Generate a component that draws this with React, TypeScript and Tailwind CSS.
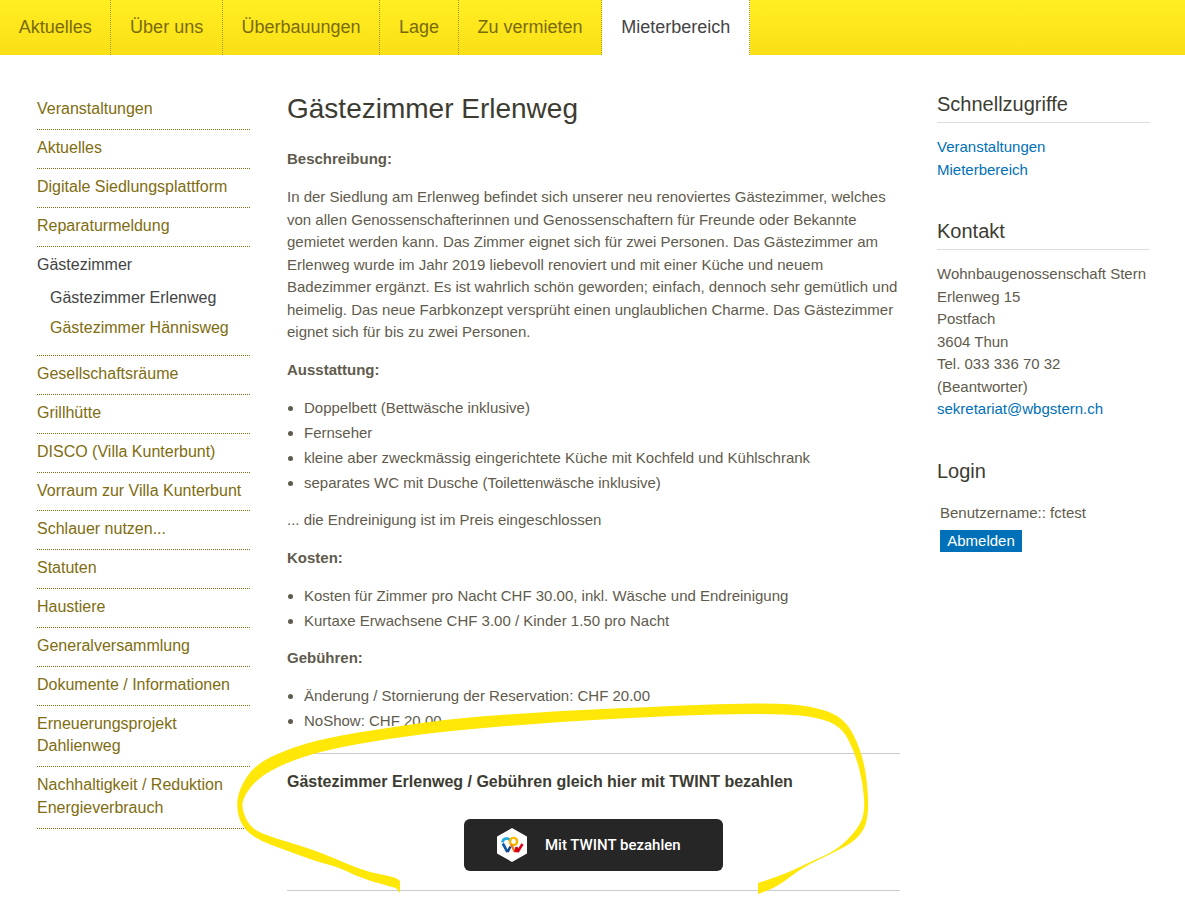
import React from 'react';

const TABS = ['Aktuelles', 'Über uns', 'Überbauungen', 'Lage', 'Zu vermieten'];

const SIDE_TOP = ['Veranstaltungen', 'Aktuelles', 'Digitale Siedlungsplattform', 'Reparaturmeldung'];
const SIDE_BOTTOM = [
  'Gesellschaftsräume',
  'Grillhütte',
  'DISCO (Villa Kunterbunt)',
  'Vorraum zur Villa Kunterbunt',
  'Schlauer nutzen...',
  'Statuten',
  'Haustiere',
  'Generalversammlung',
  'Dokumente / Informationen',
  'Erneuerungsprojekt Dahlienweg',
  'Nachhaltigkeit / Reduktion Energieverbrauch',
];

// marker stroke outline, traced from the picture
const SCRIBBLE: [number, number][] = [
  [396, 888], [365, 880], [338, 867], [318, 862], [285, 850], [258, 840], [242, 827], [236, 807], [240, 787],
  [255, 765], [285, 750], [325, 738], [392, 727], [458, 718], [555, 711], [650, 707], [717, 704], [790, 703],
  [827, 710], [847, 722], [860, 748], [867, 777], [869, 820], [857, 840], [833, 853], [803, 867], [777, 887],
  [758, 894], [758, 883], [783, 875], [810, 862], [837, 850], [857, 830], [865, 813], [863, 783], [855, 753],
  [842, 727], [817, 717], [783, 714], [717, 714], [650, 717], [555, 722], [458, 730], [392, 738], [325, 750],
  [285, 763], [258, 778], [243, 797], [242, 810], [250, 827], [265, 835], [298, 845], [322, 853], [345, 863],
  [368, 872], [395, 877], [400, 881], [400, 893], [396, 893],
];

const scribblePath = () => {
  let d = `M${SCRIBBLE[0][0]} ${SCRIBBLE[0][1]}`;
  for (let i = 1; i < SCRIBBLE.length - 1; i++) {
    const [x, y] = SCRIBBLE[i];
    const [nx, ny] = SCRIBBLE[i + 1];
    // keep the two cut ends of the stroke sharp
    if (i === 27 || i === 28 || i >= 56) d += ` L${x} ${y}`;
    else d += ` Q${x} ${y} ${(x + nx) / 2} ${(y + ny) / 2}`;
  }
  return d + ' Z';
};

const SideItem = ({ label }: { label: string }) => (
  <li className="border-b border-dotted border-[#7f6d10] pt-[7px] pb-[8.5px] leading-[22.4px]">
    <a className="text-[#7f6d10]">{label}</a>
  </li>
);

const Label = ({ children }: { children: React.ReactNode }) => (
  <p className="mb-[15.5px] font-bold">{children}</p>
);

const Bullets = ({ items }: { items: string[] }) => (
  <ul className="mb-[15px] list-disc pl-[17px] marker:text-[#5f5b4d]">
    {items.map(item => (
      <li key={item} className="mb-[2.5px]">{item}</li>
    ))}
  </ul>
);

const TwintLogo = () => (
  <svg width="32" height="36" viewBox="0 0 32 36">
    <path d="M16 1 L30.5 9.2 Q31 9.5 31 10 L31 26 Q31 26.5 30.5 26.8 L16 35 L1.5 26.8 Q1 26.5 1 26 L1 10 Q1 9.5 1.5 9.2 Z" fill="#fff" />
    <path d="M6.5 15.5 a4.2 4.2 0 0 1 8 -1.5" fill="none" stroke="#1ba7e0" strokeWidth="2.6" />
    <path d="M6.8 16.5 L11.5 25" fill="none" stroke="#0b5aa8" strokeWidth="2.6" />
    <path d="M11.5 25 L14.5 19.5" fill="none" stroke="#0f3f86" strokeWidth="2.4" />
    <circle cx="17.5" cy="14.5" r="3.6" fill="none" stroke="#f7b500" strokeWidth="2.4" />
    <path d="M15 17.5 L19 25" fill="none" stroke="#f2761b" strokeWidth="2.4" />
    <path d="M19 25 L21.5 20.5" fill="none" stroke="#e3001b" strokeWidth="2.6" />
    <path d="M21.5 25 L26.5 17" fill="none" stroke="#e3001b" strokeWidth="2.6" />
    <path d="M20 20 L22 25" fill="none" stroke="#c8001a" strokeWidth="2.4" />
  </svg>
);

export default function App() {
  return (
    <div className="relative h-[900px] overflow-hidden bg-white font-['Liberation_Sans',Arial,sans-serif] text-[15px] leading-[22.5px] text-[#5f5b4d]">
      <nav className="flex h-[55px] bg-linear-to-b from-[#ffee22] to-[#fae016]">
        {TABS.map(tab => (
          <a key={tab} className="flex items-center border-r border-dotted border-[#a8981a] px-[18.7px] text-[18px] text-[#7a6a0c]">
            {tab}
          </a>
        ))}
        <a className="flex items-center border-r border-dotted border-[#a8981a] bg-white px-[19px] text-[18px] text-[#444]">
          Mieterbereich
        </a>
      </nav>

      <div className="flex pl-[37px] pr-[35px]">
        <aside className="mt-[36px] w-[213px] shrink-0 text-[16px]">
          <ul>
            {SIDE_TOP.map(item => <SideItem key={item} label={item} />)}
            <li className="border-b border-dotted border-[#7f6d10] pt-[7px] pb-[15px] leading-[22.4px]">
              <span className="text-[#444]">Gästezimmer</span>
              <ul className="mt-[11px] pl-[13px]">
                <li className="mb-[8px] text-[#444]">Gästezimmer Erlenweg</li>
                <li className="text-[#7f6d10]">Gästezimmer Hännisweg</li>
              </ul>
            </li>
            {SIDE_BOTTOM.map(item => <SideItem key={item} label={item} />)}
          </ul>
        </aside>

        <main className="ml-[37px] w-[613px] shrink-0">
          <h1 className="mt-[37px] mb-[22px] text-[28px] leading-[34px] text-[#3c3c32]">Gästezimmer Erlenweg</h1>
          <Label>Beschreibung:</Label>
          <p className="mb-[15px]">
            In der Siedlung am Erlenweg befindet sich unserer neu renoviertes Gästezimmer, welches von allen Genossenschafterinnen und Genossenschaftern für Freunde oder Bekannte gemietet werden kann. Das Zimmer eignet sich für zwei Personen. Das Gästezimmer am Erlenweg wurde im Jahr 2019 liebevoll renoviert und mit einer Küche und neuem Badezimmer ergänzt. Es ist wahrlich schön geworden; einfach, dennoch sehr gemütlich und heimelig. Das neue Farbkonzept versprüht einen unglaublichen Charme. Das Gästezimmer eignet sich für bis zu zwei Personen.
          </p>
          <Label>Ausstattung:</Label>
          <Bullets
            items={[
              'Doppelbett (Bettwäsche inklusive)',
              'Fernseher',
              'kleine aber zweckmässig eingerichtete Küche mit Kochfeld und Kühlschrank',
              'separates WC mit Dusche (Toilettenwäsche inklusive)',
            ]}
          />
          <p className="mb-[15px]">... die Endreinigung ist im Preis eingeschlossen</p>
          <Label>Kosten:</Label>
          <Bullets items={['Kosten für Zimmer pro Nacht CHF 30.00, inkl. Wäsche und Endreinigung', 'Kurtaxe Erwachsene CHF 3.00 / Kinder 1.50 pro Nacht']} />
          <Label>Gebühren:</Label>
          <Bullets items={['Änderung / Stornierung der Reservation: CHF 20.00', 'NoShow: CHF 20.00']} />

          <div className="mt-[20px] border-y border-[#ccc] pt-[17px] pb-[19px]">
            <h2 className="mb-[26px] text-[16px] leading-[22.5px] font-bold text-[#3c3c32]">
              Gästezimmer Erlenweg / Gebühren gleich hier mit TWINT bezahlen
            </h2>
            <div className="flex justify-center">
              <a className="flex h-[52px] w-[259px] items-center gap-[17px] rounded-[6px] bg-[#262626] pl-[32px] font-['Roboto',sans-serif] text-[15px] font-medium text-white">
                <TwintLogo />
                Mit TWINT bezahlen
              </a>
            </div>
          </div>
        </main>

        <aside className="ml-[37px] w-[213px] shrink-0">
          <h3 className="mt-[37px] border-b border-[#ddd] pb-[6px] text-[20px] leading-[24px] text-[#3c3c32]">Schnellzugriffe</h3>
          <div className="mt-[13px] text-[#0070b8]">
            <p>Veranstaltungen</p>
            <p>Mieterbereich</p>
          </div>
          <h3 className="mt-[38px] border-b border-[#ddd] pb-[6px] text-[20px] leading-[24px] text-[#3c3c32]">Kontakt</h3>
          <div className="mt-[13px]">
            <p>Wohnbaugenossenschaft Stern</p>
            <p>Erlenweg 15</p>
            <p>Postfach</p>
            <p>3604 Thun</p>
            <p>Tel. 033 336 70 32</p>
            <p>(Beantworter)</p>
            <p className="text-[#0070b8]">sekretariat@wbgstern.ch</p>
          </div>
          <h3 className="mt-[38px] text-[20px] leading-[24px] text-[#3c3c32]">Login</h3>
          <div className="mt-[19px] pl-[3px]">
            <p>Benutzername:: fctest</p>
            <button className="mt-[6px] block h-[22px] w-[82px] bg-[#0070b8] text-center text-[15px] leading-[22px] font-normal text-white">
              Abmelden
            </button>
          </div>
        </aside>
      </div>

      <svg className="pointer-events-none absolute top-0 left-0" width="1185" height="900" viewBox="0 0 1185 900">
        <path d={scribblePath()} fill="#ffe600" fillOpacity="0.97" />
      </svg>
    </div>
  );
}
